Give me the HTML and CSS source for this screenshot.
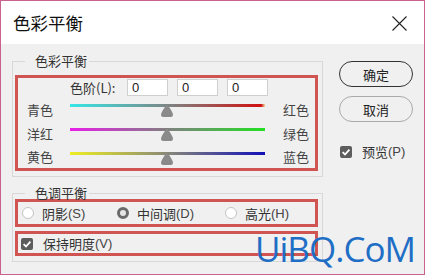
FILE: index.html
```html
<!doctype html>
<html>
<head>
<meta charset="utf-8">
<title>色彩平衡</title>
<link rel="stylesheet" href="styles.css">
</head>
<body>
<div class="win">
	<div class="titlebar">
		<span class="title">色彩平衡</span>
		<svg class="close" width="15" height="15" viewBox="0 0 15 15"><path d="M0.5 0.5 L14.5 14.5 M14.5 0.5 L0.5 14.5" stroke="#222" stroke-width="1.1" fill="none"/></svg>
	</div>
	<div class="main">
		<div class="left">
			<fieldset class="group balance">
				<legend>色彩平衡</legend>
				<div class="mark levels-box">
					<div class="levels">
						<span class="lab">色阶(L):</span>
						<span class="num">0</span>
						<span class="num">0</span>
						<span class="num">0</span>
					</div>
					<div class="srow">
						<span class="sl">青色</span>
						<div class="track"><div class="bar cr"></div><svg class="thumb" width="12" height="12" viewBox="0 0 12 12"><path d="M6 0 C7.2 0 12 7.5 12 9.8 C12 11.3 11 12 9.8 12 H2.2 C1 12 0 11.3 0 9.8 C0 7.5 4.8 0 6 0Z" fill="#8a8a8a"/></svg></div>
						<span class="sr">红色</span>
					</div>
					<div class="srow">
						<span class="sl">洋红</span>
						<div class="track"><div class="bar mg"></div><svg class="thumb" width="12" height="12" viewBox="0 0 12 12"><path d="M6 0 C7.2 0 12 7.5 12 9.8 C12 11.3 11 12 9.8 12 H2.2 C1 12 0 11.3 0 9.8 C0 7.5 4.8 0 6 0Z" fill="#8a8a8a"/></svg></div>
						<span class="sr">绿色</span>
					</div>
					<div class="srow last">
						<span class="sl">黄色</span>
						<div class="track"><div class="bar yb"></div><svg class="thumb" width="12" height="12" viewBox="0 0 12 12"><path d="M6 0 C7.2 0 12 7.5 12 9.8 C12 11.3 11 12 9.8 12 H2.2 C1 12 0 11.3 0 9.8 C0 7.5 4.8 0 6 0Z" fill="#8a8a8a"/></svg></div>
						<span class="sr">蓝色</span>
					</div>
				</div>
			</fieldset>
			<fieldset class="group tone">
				<legend>色调平衡</legend>
				<div class="mark radios">
					<label class="opt o1"><span class="radio"></span>阴影<i>(S)</i></label>
					<label class="opt o2"><span class="radio on"></span>中间调<i>(D)</i></label>
					<label class="opt o3"><span class="radio"></span>高光<i>(H)</i></label>
				</div>
				<div class="mark keep">
					<label class="opt"><span class="check"><svg width="12" height="12" viewBox="0 0 12 12"><path d="M2.6 6.2 L5 8.5 L9.4 3.6" stroke="#fff" stroke-width="1.8" fill="none"/></svg></span>保持明度<i>(V)</i></label>
				</div>
			</fieldset>
		</div>
		<div class="right">
			<div class="btn ok">确定</div>
			<div class="btn">取消</div>
			<label class="opt preview"><span class="check"><svg width="12" height="12" viewBox="0 0 12 12"><path d="M2.6 6.2 L5 8.5 L9.4 3.6" stroke="#fff" stroke-width="1.8" fill="none"/></svg></span>预览<i>(P)</i></label>
		</div>
	</div>
	<div class="watermark">UiBQ.CoM</div>
</div>
</body>
</html>
```

FILE: styles.css
```css
* {margin:0; padding:0; box-sizing:border-box;}

body {font-family:"Noto Sans CJK SC", "Noto Sans", sans-serif; font-size:13px; color:#333;}

.win {width:425px; height:275px; border:1px solid #c9628d; background:#f0f0f0; position:relative; overflow:hidden;}

.titlebar {height:43px; background:#fff; display:flex; align-items:center; justify-content:space-between; padding:0 17px 0 12px;}
.title {font-size:17.5px; color:#111; line-height:20px; margin-top:1px;}
.close {display:block; margin-top:1px;}

.main {display:flex;}
.left {width:311px; margin-left:11px;}
.right {width:74px; margin-left:16px; padding-top:17px; display:flex; flex-direction:column;}

.group {border:1px solid #d8d8d8; padding:8px 4px 5px 2px; min-width:0;}
.group legend {margin-left:10px; padding:0 2px 0 10px; line-height:12px; font-size:13px; color:#333;}
.balance {margin-top:11px;}
.tone {margin-top:10px; padding-top:0;}

.mark {border:3px solid #d05451;}

.levels {display:flex; align-items:center; height:19px; padding-left:52px;}
.lab {width:57px; line-height:17px;}
.num {width:41px; height:17px; background:#fff; border:1px solid #cfcfcf; margin-right:9px; padding-left:4px; font-family:"Liberation Sans", sans-serif; font-size:13px; line-height:15px; color:#222;}

.srow {display:flex; align-items:center; height:24px; padding-left:9px;}
.srow.last {height:23px;}
.sl {width:43px; color:#444;}
.sr {margin-left:18px; color:#444;}
.track {width:195px; height:22px; padding-top:6px; position:relative;}
.bar {height:3px;}
.cr {background:linear-gradient(to right, #36e6e6, #7c8686 50%, #d01010 98%, #f0e0a0);}
.mg {background:linear-gradient(to right, #e81ee8, #808080 50%, #22e022);}
.yb {background:linear-gradient(to right, #eeee22, #888878 50%, #1010b8);}
.thumb {position:absolute; left:91px; top:7px;}

.opt {display:flex; align-items:center; color:#333;}
.opt i {font-style:normal; font-family:"Liberation Sans", sans-serif; color:#444;}

.radios {height:28px; display:flex; align-items:center; padding-left:4px;}
.o1 {width:95px;}
.o2 {width:108px;}
.radio {width:12px; height:12px; border-radius:50%; background:#fff; border:1px solid #c4c4c4; margin-right:8px;}
.radio.on {border:3px solid #6a6a6a; background:#e6e6e6;}

.keep {height:25px; margin-top:4px; display:flex; align-items:center; padding-left:3px;}
.check {width:12px; height:12px; border-radius:2px; background:#5d5d5d; margin-right:10px; display:block;}
.check svg {display:block;}

.btn {height:26px; border:1px solid #aaa; border-radius:13px; display:flex; align-items:center; justify-content:center; margin-bottom:9px; color:#222;}
.btn.ok {border-color:#333;}
.preview {margin-top:11px; padding-left:1px;}

.watermark {position:absolute; left:254px; top:226px; font-family:"Open Sans", sans-serif; font-size:35px; letter-spacing:-1px; color:#1f6ec6; line-height:44px;}
```
